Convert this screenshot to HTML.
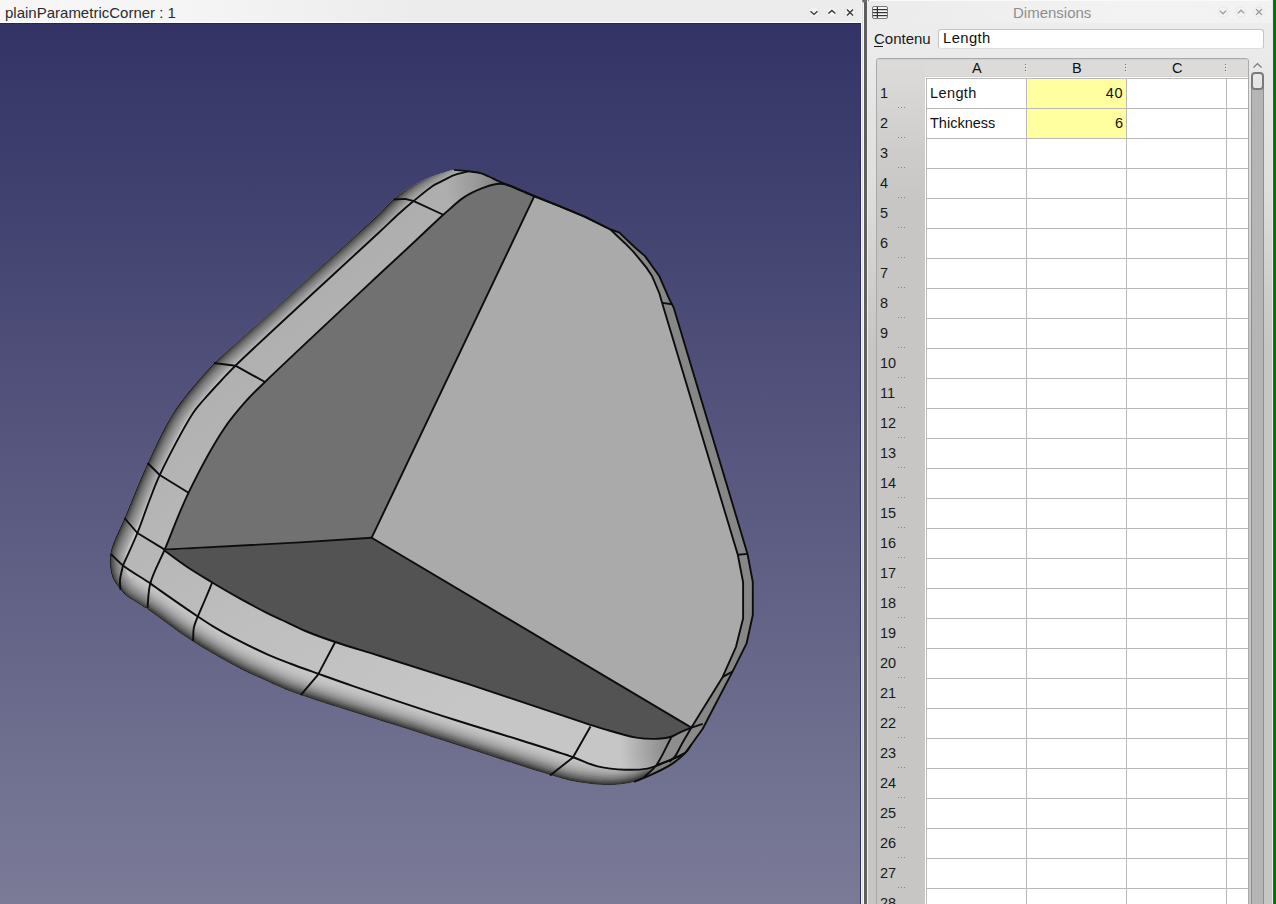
<!DOCTYPE html>
<html><head><meta charset="utf-8">
<style>
html,body{margin:0;padding:0;width:1276px;height:904px;overflow:hidden;background:#ebebeb;font-family:"Liberation Sans", sans-serif;}
.abs{position:absolute;}
#ltitle{left:0;top:0;width:861px;height:22px;background:linear-gradient(to right,#f6f6f6 0px,#f5f5f5 180px,#efefef 340px,#ececec 420px,#ececec 861px);border-bottom:1px solid #ffffff;}
#ltitle .t{position:absolute;left:5px;top:4px;font-size:15px;color:#2b2b2b;white-space:pre;line-height:17px;}
#view{left:0;top:23px;width:861px;height:881px;}
#rpanel{left:867px;top:0;width:406px;height:904px;background:linear-gradient(to bottom,#eeeeee 0px,#ebebeb 50px,#e9e9e9 66px,#e3e3e2 126px,#dfdfdd 186px,#d5d4d3 250px,#cccbca 306px,#c7c6c5 345px,#c7c6c5 904px);}
#rtitle{left:868px;top:0;width:404px;height:23px;background:linear-gradient(100deg,#ebebeb 0%,#eeeeee 25%,#f3f3f3 65%,#f2f2f2 100%);border-top:1px solid #fafafa;box-sizing:border-box;border-radius:3px 3px 0 0;}
.rn{position:absolute;left:880px;font-size:14.5px;color:#1a1a1a;line-height:17px;}
.dots{position:absolute;left:898px;width:7px;height:2px;background:
 radial-gradient(circle at 0.5px 0.5px,#858585 0.6px,transparent 0.9px) 0 0/3px 2px repeat-x;}
.ct{position:absolute;font-size:14.5px;color:#111;line-height:17px;white-space:pre;}
.btn{position:absolute;width:11px;height:11px;border-radius:50%;background:radial-gradient(circle,#f4f4f4 60%,#e4e4e4 100%);}
</style></head><body>
<div id="ltitle" class="abs"><span class="t">plainParametricCorner : 1</span></div>
<svg class="abs" style="left:0;top:0" width="868" height="23">
 <g fill="none" stroke="#3a3a3a" stroke-width="1.4" stroke-linecap="butt">
  <circle cx="814" cy="12" r="5.5" fill="#f2f2f2" stroke="#e6e6e6" stroke-width="1"/>
  <circle cx="832" cy="12" r="5.5" fill="#f2f2f2" stroke="#e6e6e6" stroke-width="1"/>
  <circle cx="850" cy="12" r="5.5" fill="#f2f2f2" stroke="#e6e6e6" stroke-width="1"/>
  <polyline points="810.5,11.2 814,14.4 817.5,11.2"/>
  <polyline points="828.4,13.6 831.9,10.4 835.4,13.6"/>
  <path d="M847,9.6 L853,15.5 M853,9.6 L847,15.5"/>
 </g>
</svg>
<svg id="view" class="abs" width="861" height="881" viewBox="0 23 861 881">
<defs>
 <linearGradient id="bg" x1="0" y1="23" x2="0" y2="904" gradientUnits="userSpaceOnUse">
  <stop offset="0" stop-color="#333366"/><stop offset="1" stop-color="#7b7b98"/>
 </linearGradient>
 <linearGradient id="innerg" x1="200" y1="350" x2="450" y2="720" gradientUnits="userSpaceOnUse">
  <stop offset="0" stop-color="#aeaeae"/><stop offset="0.55" stop-color="#bebebe"/><stop offset="0.9" stop-color="#c4c4c4"/><stop offset="1" stop-color="#c6c6c6"/>
 </linearGradient>
 <radialGradient id="cornerg" cx="690" cy="748" r="70" gradientUnits="userSpaceOnUse">
  <stop offset="0" stop-color="#000" stop-opacity="0.45"/><stop offset="0.45" stop-color="#000" stop-opacity="0.25"/><stop offset="1" stop-color="#000" stop-opacity="0"/>
 </radialGradient>
 <linearGradient id="fadeg" x1="395" y1="0" x2="462" y2="0" gradientUnits="userSpaceOnUse">
  <stop offset="0" stop-color="#fff"/><stop offset="1" stop-color="#fff" stop-opacity="0.15"/>
 </linearGradient>
 <mask id="fadem" maskUnits="userSpaceOnUse" x="0" y="23" width="861" height="881"><rect x="0" y="23" width="861" height="881" fill="url(#fadeg)"/></mask>
 <radialGradient id="topg" cx="505" cy="184" r="60" gradientUnits="userSpaceOnUse">
  <stop offset="0" stop-color="#000" stop-opacity="0.3"/><stop offset="0.5" stop-color="#000" stop-opacity="0.12"/><stop offset="1" stop-color="#000" stop-opacity="0"/>
 </radialGradient>
 <clipPath id="silclip"><path d="M214.0,363.0 C269.3,312.9 356.3,235.3 380.0,212.7 C386.7,206.3 388.0,204.0 392.5,200.1 C397.2,196.0 402.3,192.1 407.6,188.8 C412.8,185.5 418.4,182.6 423.9,180.1 C429.3,177.6 434.9,175.5 440.2,173.8 C445.0,172.2 449.4,170.3 454.1,169.9 C458.7,169.5 463.7,170.7 468.2,171.3 C472.4,171.8 476.8,172.2 480.5,173.2 C483.6,174.0 486.1,175.2 488.9,176.5 C492.0,177.9 494.9,179.7 498.3,181.2 C502.1,182.9 506.1,184.1 510.6,185.9 C516.4,188.2 523.5,191.4 530.0,194.1 L530.0,194.1 L558.8,205.8 L584.6,216.6 L610.5,229.5 L610.5,229.5 L619.1,232.4 L635.0,247.5 L645.0,256.1 L659.4,276.3 L669.4,299.3 L673.8,307.9 L747.5,553.9 L752.8,582.2 L752.8,615.0 L746.6,643.3 L732.5,671.6 L702.7,728.8 L702.7,728.8 C699.0,733.9 694.8,739.8 691.6,744.2 C689.1,747.6 687.8,750.1 685.0,753.1 C681.5,756.8 677.1,760.6 671.7,764.1 C664.6,768.7 652.2,774.3 645.2,777.4 C640.8,779.4 638.1,780.6 634.1,781.8 C629.7,783.1 624.8,784.0 619.8,784.6 C614.5,785.2 608.7,785.3 603.2,785.1 C597.7,784.9 592.1,784.2 586.6,783.5 C581.1,782.8 575.5,781.6 570.0,780.7 L570.0,780.7 C562.7,778.6 558.4,777.6 548.1,774.5 C523.1,766.9 462.9,747.1 420.0,733.3 C376.7,719.4 315.5,701.0 289.7,691.3 C278.6,687.1 274.0,684.6 266.2,681.1 C258.3,677.6 250.5,674.1 242.7,670.2 C234.8,666.3 227.0,662.0 219.2,657.6 C211.3,653.1 202.7,647.9 195.7,643.5 C189.9,639.9 186.2,637.5 180.0,633.3 C170.8,626.9 155.9,615.4 146.0,608.6 C138.5,603.5 130.6,599.5 126.0,595.6 C123.2,593.2 122.0,591.5 120.0,589.0 C117.7,586.1 114.7,582.7 113.0,579.0 C111.3,575.1 110.4,570.5 110.0,566.0 C109.6,561.2 109.5,556.8 110.8,551.0 C112.8,542.0 119.2,530.4 124.4,518.0 C131.1,502.0 139.4,480.8 147.6,463.0 C155.6,445.8 163.8,427.6 173.0,413.0 C180.9,400.4 190.9,389.1 198.5,380.0 C204.2,373.3 208.8,368.7 214.0,363.0 Z"/></clipPath>
 <filter id="bl" x="-10%" y="-10%" width="120%" height="120%"><feGaussianBlur stdDeviation="0.6"/></filter>
</defs>
<rect x="0" y="23" width="861" height="881" fill="url(#bg)"/>
<rect x="0" y="23" width="861" height="1" fill="#24245a"/>
<rect x="860" y="23" width="1" height="881" fill="#2a2a5e"/>
<path d="M214.0,363.0 C269.3,312.9 356.3,235.3 380.0,212.7 C386.7,206.3 388.0,204.0 392.5,200.1 C397.2,196.0 402.3,192.1 407.6,188.8 C412.8,185.5 418.4,182.6 423.9,180.1 C429.3,177.6 434.9,175.5 440.2,173.8 C445.0,172.2 449.4,170.3 454.1,169.9 C458.7,169.5 463.7,170.7 468.2,171.3 C472.4,171.8 476.8,172.2 480.5,173.2 C483.6,174.0 486.1,175.2 488.9,176.5 C492.0,177.9 494.9,179.7 498.3,181.2 C502.1,182.9 506.1,184.1 510.6,185.9 C516.4,188.2 523.5,191.4 530.0,194.1 L530.0,194.1 L558.8,205.8 L584.6,216.6 L610.5,229.5 L610.5,229.5 L619.1,232.4 L635.0,247.5 L645.0,256.1 L659.4,276.3 L669.4,299.3 L673.8,307.9 L747.5,553.9 L752.8,582.2 L752.8,615.0 L746.6,643.3 L732.5,671.6 L702.7,728.8 L702.7,728.8 C699.0,733.9 694.8,739.8 691.6,744.2 C689.1,747.6 687.8,750.1 685.0,753.1 C681.5,756.8 677.1,760.6 671.7,764.1 C664.6,768.7 652.2,774.3 645.2,777.4 C640.8,779.4 638.1,780.6 634.1,781.8 C629.7,783.1 624.8,784.0 619.8,784.6 C614.5,785.2 608.7,785.3 603.2,785.1 C597.7,784.9 592.1,784.2 586.6,783.5 C581.1,782.8 575.5,781.6 570.0,780.7 L570.0,780.7 C562.7,778.6 558.4,777.6 548.1,774.5 C523.1,766.9 462.9,747.1 420.0,733.3 C376.7,719.4 315.5,701.0 289.7,691.3 C278.6,687.1 274.0,684.6 266.2,681.1 C258.3,677.6 250.5,674.1 242.7,670.2 C234.8,666.3 227.0,662.0 219.2,657.6 C211.3,653.1 202.7,647.9 195.7,643.5 C189.9,639.9 186.2,637.5 180.0,633.3 C170.8,626.9 155.9,615.4 146.0,608.6 C138.5,603.5 130.6,599.5 126.0,595.6 C123.2,593.2 122.0,591.5 120.0,589.0 C117.7,586.1 114.7,582.7 113.0,579.0 C111.3,575.1 110.4,570.5 110.0,566.0 C109.6,561.2 109.5,556.8 110.8,551.0 C112.8,542.0 119.2,530.4 124.4,518.0 C131.1,502.0 139.4,480.8 147.6,463.0 C155.6,445.8 163.8,427.6 173.0,413.0 C180.9,400.4 190.9,389.1 198.5,380.0 C204.2,373.3 208.8,368.7 214.0,363.0 Z" fill="#c4c4c4"/>
<g clip-path="url(#silclip)"><g filter="url(#bl)">
<rect x="0" y="23" width="861" height="881" fill="#c2c2c2"/>
<path d="M685.0,753.1 C680.6,756.8 677.1,760.6 671.7,764.1 C664.6,768.7 652.2,774.3 645.2,777.4 C640.8,779.4 638.1,780.6 634.1,781.8 C629.7,783.1 624.8,784.0 619.8,784.6 C614.5,785.2 608.7,785.3 603.2,785.1 C597.7,784.9 592.1,784.2 586.6,783.5 C581.1,782.8 575.9,782.0 570.0,780.7 C563.2,779.2 558.4,777.6 548.1,774.5 C523.1,766.9 462.9,747.1 420.0,733.3 C376.7,719.4 315.5,701.0 289.7,691.3 C278.6,687.1 274.0,684.6 266.2,681.1 C258.3,677.6 250.5,674.1 242.7,670.2 C234.8,666.3 227.0,662.0 219.2,657.6 C211.3,653.1 202.7,647.9 195.7,643.5 C189.9,639.9 186.2,637.5 180.0,633.3 C170.8,626.9 155.9,615.4 146.0,608.6 C138.5,603.5 130.6,599.5 126.0,595.6 C123.2,593.2 122.0,591.2 120.0,589.0" fill="none" stroke="rgb(199,199,199)" stroke-width="54.0" stroke-linejoin="round" stroke-linecap="butt"/>
<path d="M685.0,753.1 C680.6,756.8 677.1,760.6 671.7,764.1 C664.6,768.7 652.2,774.3 645.2,777.4 C640.8,779.4 638.1,780.6 634.1,781.8 C629.7,783.1 624.8,784.0 619.8,784.6 C614.5,785.2 608.7,785.3 603.2,785.1 C597.7,784.9 592.1,784.2 586.6,783.5 C581.1,782.8 575.9,782.0 570.0,780.7 C563.2,779.2 558.4,777.6 548.1,774.5 C523.1,766.9 462.9,747.1 420.0,733.3 C376.7,719.4 315.5,701.0 289.7,691.3 C278.6,687.1 274.0,684.6 266.2,681.1 C258.3,677.6 250.5,674.1 242.7,670.2 C234.8,666.3 227.0,662.0 219.2,657.6 C211.3,653.1 202.7,647.9 195.7,643.5 C189.9,639.9 186.2,637.5 180.0,633.3 C170.8,626.9 155.9,615.4 146.0,608.6 C138.5,603.5 130.6,599.5 126.0,595.6 C123.2,593.2 122.0,591.2 120.0,589.0" fill="none" stroke="rgb(199,199,199)" stroke-width="50.6" stroke-linejoin="round" stroke-linecap="butt"/>
<path d="M685.0,753.1 C680.6,756.8 677.1,760.6 671.7,764.1 C664.6,768.7 652.2,774.3 645.2,777.4 C640.8,779.4 638.1,780.6 634.1,781.8 C629.7,783.1 624.8,784.0 619.8,784.6 C614.5,785.2 608.7,785.3 603.2,785.1 C597.7,784.9 592.1,784.2 586.6,783.5 C581.1,782.8 575.9,782.0 570.0,780.7 C563.2,779.2 558.4,777.6 548.1,774.5 C523.1,766.9 462.9,747.1 420.0,733.3 C376.7,719.4 315.5,701.0 289.7,691.3 C278.6,687.1 274.0,684.6 266.2,681.1 C258.3,677.6 250.5,674.1 242.7,670.2 C234.8,666.3 227.0,662.0 219.2,657.6 C211.3,653.1 202.7,647.9 195.7,643.5 C189.9,639.9 186.2,637.5 180.0,633.3 C170.8,626.9 155.9,615.4 146.0,608.6 C138.5,603.5 130.6,599.5 126.0,595.6 C123.2,593.2 122.0,591.2 120.0,589.0" fill="none" stroke="rgb(198,198,198)" stroke-width="47.2" stroke-linejoin="round" stroke-linecap="butt"/>
<path d="M685.0,753.1 C680.6,756.8 677.1,760.6 671.7,764.1 C664.6,768.7 652.2,774.3 645.2,777.4 C640.8,779.4 638.1,780.6 634.1,781.8 C629.7,783.1 624.8,784.0 619.8,784.6 C614.5,785.2 608.7,785.3 603.2,785.1 C597.7,784.9 592.1,784.2 586.6,783.5 C581.1,782.8 575.9,782.0 570.0,780.7 C563.2,779.2 558.4,777.6 548.1,774.5 C523.1,766.9 462.9,747.1 420.0,733.3 C376.7,719.4 315.5,701.0 289.7,691.3 C278.6,687.1 274.0,684.6 266.2,681.1 C258.3,677.6 250.5,674.1 242.7,670.2 C234.8,666.3 227.0,662.0 219.2,657.6 C211.3,653.1 202.7,647.9 195.7,643.5 C189.9,639.9 186.2,637.5 180.0,633.3 C170.8,626.9 155.9,615.4 146.0,608.6 C138.5,603.5 130.6,599.5 126.0,595.6 C123.2,593.2 122.0,591.2 120.0,589.0" fill="none" stroke="rgb(196,196,196)" stroke-width="43.9" stroke-linejoin="round" stroke-linecap="butt"/>
<path d="M685.0,753.1 C680.6,756.8 677.1,760.6 671.7,764.1 C664.6,768.7 652.2,774.3 645.2,777.4 C640.8,779.4 638.1,780.6 634.1,781.8 C629.7,783.1 624.8,784.0 619.8,784.6 C614.5,785.2 608.7,785.3 603.2,785.1 C597.7,784.9 592.1,784.2 586.6,783.5 C581.1,782.8 575.9,782.0 570.0,780.7 C563.2,779.2 558.4,777.6 548.1,774.5 C523.1,766.9 462.9,747.1 420.0,733.3 C376.7,719.4 315.5,701.0 289.7,691.3 C278.6,687.1 274.0,684.6 266.2,681.1 C258.3,677.6 250.5,674.1 242.7,670.2 C234.8,666.3 227.0,662.0 219.2,657.6 C211.3,653.1 202.7,647.9 195.7,643.5 C189.9,639.9 186.2,637.5 180.0,633.3 C170.8,626.9 155.9,615.4 146.0,608.6 C138.5,603.5 130.6,599.5 126.0,595.6 C123.2,593.2 122.0,591.2 120.0,589.0" fill="none" stroke="rgb(193,193,193)" stroke-width="40.5" stroke-linejoin="round" stroke-linecap="butt"/>
<path d="M685.0,753.1 C680.6,756.8 677.1,760.6 671.7,764.1 C664.6,768.7 652.2,774.3 645.2,777.4 C640.8,779.4 638.1,780.6 634.1,781.8 C629.7,783.1 624.8,784.0 619.8,784.6 C614.5,785.2 608.7,785.3 603.2,785.1 C597.7,784.9 592.1,784.2 586.6,783.5 C581.1,782.8 575.9,782.0 570.0,780.7 C563.2,779.2 558.4,777.6 548.1,774.5 C523.1,766.9 462.9,747.1 420.0,733.3 C376.7,719.4 315.5,701.0 289.7,691.3 C278.6,687.1 274.0,684.6 266.2,681.1 C258.3,677.6 250.5,674.1 242.7,670.2 C234.8,666.3 227.0,662.0 219.2,657.6 C211.3,653.1 202.7,647.9 195.7,643.5 C189.9,639.9 186.2,637.5 180.0,633.3 C170.8,626.9 155.9,615.4 146.0,608.6 C138.5,603.5 130.6,599.5 126.0,595.6 C123.2,593.2 122.0,591.2 120.0,589.0" fill="none" stroke="rgb(188,188,188)" stroke-width="37.1" stroke-linejoin="round" stroke-linecap="butt"/>
<path d="M685.0,753.1 C680.6,756.8 677.1,760.6 671.7,764.1 C664.6,768.7 652.2,774.3 645.2,777.4 C640.8,779.4 638.1,780.6 634.1,781.8 C629.7,783.1 624.8,784.0 619.8,784.6 C614.5,785.2 608.7,785.3 603.2,785.1 C597.7,784.9 592.1,784.2 586.6,783.5 C581.1,782.8 575.9,782.0 570.0,780.7 C563.2,779.2 558.4,777.6 548.1,774.5 C523.1,766.9 462.9,747.1 420.0,733.3 C376.7,719.4 315.5,701.0 289.7,691.3 C278.6,687.1 274.0,684.6 266.2,681.1 C258.3,677.6 250.5,674.1 242.7,670.2 C234.8,666.3 227.0,662.0 219.2,657.6 C211.3,653.1 202.7,647.9 195.7,643.5 C189.9,639.9 186.2,637.5 180.0,633.3 C170.8,626.9 155.9,615.4 146.0,608.6 C138.5,603.5 130.6,599.5 126.0,595.6 C123.2,593.2 122.0,591.2 120.0,589.0" fill="none" stroke="rgb(183,183,183)" stroke-width="33.8" stroke-linejoin="round" stroke-linecap="butt"/>
<path d="M685.0,753.1 C680.6,756.8 677.1,760.6 671.7,764.1 C664.6,768.7 652.2,774.3 645.2,777.4 C640.8,779.4 638.1,780.6 634.1,781.8 C629.7,783.1 624.8,784.0 619.8,784.6 C614.5,785.2 608.7,785.3 603.2,785.1 C597.7,784.9 592.1,784.2 586.6,783.5 C581.1,782.8 575.9,782.0 570.0,780.7 C563.2,779.2 558.4,777.6 548.1,774.5 C523.1,766.9 462.9,747.1 420.0,733.3 C376.7,719.4 315.5,701.0 289.7,691.3 C278.6,687.1 274.0,684.6 266.2,681.1 C258.3,677.6 250.5,674.1 242.7,670.2 C234.8,666.3 227.0,662.0 219.2,657.6 C211.3,653.1 202.7,647.9 195.7,643.5 C189.9,639.9 186.2,637.5 180.0,633.3 C170.8,626.9 155.9,615.4 146.0,608.6 C138.5,603.5 130.6,599.5 126.0,595.6 C123.2,593.2 122.0,591.2 120.0,589.0" fill="none" stroke="rgb(175,175,175)" stroke-width="30.4" stroke-linejoin="round" stroke-linecap="butt"/>
<path d="M685.0,753.1 C680.6,756.8 677.1,760.6 671.7,764.1 C664.6,768.7 652.2,774.3 645.2,777.4 C640.8,779.4 638.1,780.6 634.1,781.8 C629.7,783.1 624.8,784.0 619.8,784.6 C614.5,785.2 608.7,785.3 603.2,785.1 C597.7,784.9 592.1,784.2 586.6,783.5 C581.1,782.8 575.9,782.0 570.0,780.7 C563.2,779.2 558.4,777.6 548.1,774.5 C523.1,766.9 462.9,747.1 420.0,733.3 C376.7,719.4 315.5,701.0 289.7,691.3 C278.6,687.1 274.0,684.6 266.2,681.1 C258.3,677.6 250.5,674.1 242.7,670.2 C234.8,666.3 227.0,662.0 219.2,657.6 C211.3,653.1 202.7,647.9 195.7,643.5 C189.9,639.9 186.2,637.5 180.0,633.3 C170.8,626.9 155.9,615.4 146.0,608.6 C138.5,603.5 130.6,599.5 126.0,595.6 C123.2,593.2 122.0,591.2 120.0,589.0" fill="none" stroke="rgb(167,167,167)" stroke-width="27.0" stroke-linejoin="round" stroke-linecap="butt"/>
<path d="M685.0,753.1 C680.6,756.8 677.1,760.6 671.7,764.1 C664.6,768.7 652.2,774.3 645.2,777.4 C640.8,779.4 638.1,780.6 634.1,781.8 C629.7,783.1 624.8,784.0 619.8,784.6 C614.5,785.2 608.7,785.3 603.2,785.1 C597.7,784.9 592.1,784.2 586.6,783.5 C581.1,782.8 575.9,782.0 570.0,780.7 C563.2,779.2 558.4,777.6 548.1,774.5 C523.1,766.9 462.9,747.1 420.0,733.3 C376.7,719.4 315.5,701.0 289.7,691.3 C278.6,687.1 274.0,684.6 266.2,681.1 C258.3,677.6 250.5,674.1 242.7,670.2 C234.8,666.3 227.0,662.0 219.2,657.6 C211.3,653.1 202.7,647.9 195.7,643.5 C189.9,639.9 186.2,637.5 180.0,633.3 C170.8,626.9 155.9,615.4 146.0,608.6 C138.5,603.5 130.6,599.5 126.0,595.6 C123.2,593.2 122.0,591.2 120.0,589.0" fill="none" stroke="rgb(156,156,156)" stroke-width="23.6" stroke-linejoin="round" stroke-linecap="butt"/>
<path d="M685.0,753.1 C680.6,756.8 677.1,760.6 671.7,764.1 C664.6,768.7 652.2,774.3 645.2,777.4 C640.8,779.4 638.1,780.6 634.1,781.8 C629.7,783.1 624.8,784.0 619.8,784.6 C614.5,785.2 608.7,785.3 603.2,785.1 C597.7,784.9 592.1,784.2 586.6,783.5 C581.1,782.8 575.9,782.0 570.0,780.7 C563.2,779.2 558.4,777.6 548.1,774.5 C523.1,766.9 462.9,747.1 420.0,733.3 C376.7,719.4 315.5,701.0 289.7,691.3 C278.6,687.1 274.0,684.6 266.2,681.1 C258.3,677.6 250.5,674.1 242.7,670.2 C234.8,666.3 227.0,662.0 219.2,657.6 C211.3,653.1 202.7,647.9 195.7,643.5 C189.9,639.9 186.2,637.5 180.0,633.3 C170.8,626.9 155.9,615.4 146.0,608.6 C138.5,603.5 130.6,599.5 126.0,595.6 C123.2,593.2 122.0,591.2 120.0,589.0" fill="none" stroke="rgb(144,144,144)" stroke-width="20.2" stroke-linejoin="round" stroke-linecap="butt"/>
<path d="M685.0,753.1 C680.6,756.8 677.1,760.6 671.7,764.1 C664.6,768.7 652.2,774.3 645.2,777.4 C640.8,779.4 638.1,780.6 634.1,781.8 C629.7,783.1 624.8,784.0 619.8,784.6 C614.5,785.2 608.7,785.3 603.2,785.1 C597.7,784.9 592.1,784.2 586.6,783.5 C581.1,782.8 575.9,782.0 570.0,780.7 C563.2,779.2 558.4,777.6 548.1,774.5 C523.1,766.9 462.9,747.1 420.0,733.3 C376.7,719.4 315.5,701.0 289.7,691.3 C278.6,687.1 274.0,684.6 266.2,681.1 C258.3,677.6 250.5,674.1 242.7,670.2 C234.8,666.3 227.0,662.0 219.2,657.6 C211.3,653.1 202.7,647.9 195.7,643.5 C189.9,639.9 186.2,637.5 180.0,633.3 C170.8,626.9 155.9,615.4 146.0,608.6 C138.5,603.5 130.6,599.5 126.0,595.6 C123.2,593.2 122.0,591.2 120.0,589.0" fill="none" stroke="rgb(129,129,129)" stroke-width="16.9" stroke-linejoin="round" stroke-linecap="butt"/>
<path d="M685.0,753.1 C680.6,756.8 677.1,760.6 671.7,764.1 C664.6,768.7 652.2,774.3 645.2,777.4 C640.8,779.4 638.1,780.6 634.1,781.8 C629.7,783.1 624.8,784.0 619.8,784.6 C614.5,785.2 608.7,785.3 603.2,785.1 C597.7,784.9 592.1,784.2 586.6,783.5 C581.1,782.8 575.9,782.0 570.0,780.7 C563.2,779.2 558.4,777.6 548.1,774.5 C523.1,766.9 462.9,747.1 420.0,733.3 C376.7,719.4 315.5,701.0 289.7,691.3 C278.6,687.1 274.0,684.6 266.2,681.1 C258.3,677.6 250.5,674.1 242.7,670.2 C234.8,666.3 227.0,662.0 219.2,657.6 C211.3,653.1 202.7,647.9 195.7,643.5 C189.9,639.9 186.2,637.5 180.0,633.3 C170.8,626.9 155.9,615.4 146.0,608.6 C138.5,603.5 130.6,599.5 126.0,595.6 C123.2,593.2 122.0,591.2 120.0,589.0" fill="none" stroke="rgb(113,113,113)" stroke-width="13.5" stroke-linejoin="round" stroke-linecap="butt"/>
<path d="M685.0,753.1 C680.6,756.8 677.1,760.6 671.7,764.1 C664.6,768.7 652.2,774.3 645.2,777.4 C640.8,779.4 638.1,780.6 634.1,781.8 C629.7,783.1 624.8,784.0 619.8,784.6 C614.5,785.2 608.7,785.3 603.2,785.1 C597.7,784.9 592.1,784.2 586.6,783.5 C581.1,782.8 575.9,782.0 570.0,780.7 C563.2,779.2 558.4,777.6 548.1,774.5 C523.1,766.9 462.9,747.1 420.0,733.3 C376.7,719.4 315.5,701.0 289.7,691.3 C278.6,687.1 274.0,684.6 266.2,681.1 C258.3,677.6 250.5,674.1 242.7,670.2 C234.8,666.3 227.0,662.0 219.2,657.6 C211.3,653.1 202.7,647.9 195.7,643.5 C189.9,639.9 186.2,637.5 180.0,633.3 C170.8,626.9 155.9,615.4 146.0,608.6 C138.5,603.5 130.6,599.5 126.0,595.6 C123.2,593.2 122.0,591.2 120.0,589.0" fill="none" stroke="rgb(95,95,95)" stroke-width="10.1" stroke-linejoin="round" stroke-linecap="butt"/>
<path d="M685.0,753.1 C680.6,756.8 677.1,760.6 671.7,764.1 C664.6,768.7 652.2,774.3 645.2,777.4 C640.8,779.4 638.1,780.6 634.1,781.8 C629.7,783.1 624.8,784.0 619.8,784.6 C614.5,785.2 608.7,785.3 603.2,785.1 C597.7,784.9 592.1,784.2 586.6,783.5 C581.1,782.8 575.9,782.0 570.0,780.7 C563.2,779.2 558.4,777.6 548.1,774.5 C523.1,766.9 462.9,747.1 420.0,733.3 C376.7,719.4 315.5,701.0 289.7,691.3 C278.6,687.1 274.0,684.6 266.2,681.1 C258.3,677.6 250.5,674.1 242.7,670.2 C234.8,666.3 227.0,662.0 219.2,657.6 C211.3,653.1 202.7,647.9 195.7,643.5 C189.9,639.9 186.2,637.5 180.0,633.3 C170.8,626.9 155.9,615.4 146.0,608.6 C138.5,603.5 130.6,599.5 126.0,595.6 C123.2,593.2 122.0,591.2 120.0,589.0" fill="none" stroke="rgb(74,74,74)" stroke-width="6.8" stroke-linejoin="round" stroke-linecap="butt"/>
<path d="M685.0,753.1 C680.6,756.8 677.1,760.6 671.7,764.1 C664.6,768.7 652.2,774.3 645.2,777.4 C640.8,779.4 638.1,780.6 634.1,781.8 C629.7,783.1 624.8,784.0 619.8,784.6 C614.5,785.2 608.7,785.3 603.2,785.1 C597.7,784.9 592.1,784.2 586.6,783.5 C581.1,782.8 575.9,782.0 570.0,780.7 C563.2,779.2 558.4,777.6 548.1,774.5 C523.1,766.9 462.9,747.1 420.0,733.3 C376.7,719.4 315.5,701.0 289.7,691.3 C278.6,687.1 274.0,684.6 266.2,681.1 C258.3,677.6 250.5,674.1 242.7,670.2 C234.8,666.3 227.0,662.0 219.2,657.6 C211.3,653.1 202.7,647.9 195.7,643.5 C189.9,639.9 186.2,637.5 180.0,633.3 C170.8,626.9 155.9,615.4 146.0,608.6 C138.5,603.5 130.6,599.5 126.0,595.6 C123.2,593.2 122.0,591.2 120.0,589.0" fill="none" stroke="rgb(52,52,52)" stroke-width="3.4" stroke-linejoin="round" stroke-linecap="butt"/>
<path d="M685.0,753.1 C680.6,756.8 677.1,760.6 671.7,764.1 C664.6,768.7 652.2,774.3 645.2,777.4 C640.8,779.4 638.1,780.6 634.1,781.8 C629.7,783.1 624.8,784.0 619.8,784.6 C614.5,785.2 608.7,785.3 603.2,785.1 C597.7,784.9 592.1,784.2 586.6,783.5 C581.1,782.8 575.9,782.0 570.0,780.7 C563.2,779.2 558.4,777.6 548.1,774.5 C523.1,766.9 462.9,747.1 420.0,733.3 C376.7,719.4 315.5,701.0 289.7,691.3 C278.6,687.1 274.0,684.6 266.2,681.1 C258.3,677.6 250.5,674.1 242.7,670.2 C234.8,666.3 227.0,662.0 219.2,657.6 C211.3,653.1 202.7,647.9 195.7,643.5 C189.9,639.9 186.2,637.5 180.0,633.3 C170.8,626.9 155.9,615.4 146.0,608.6 C138.5,603.5 130.6,599.5 126.0,595.6 C123.2,593.2 122.0,591.2 120.0,589.0" fill="none" stroke="rgb(40,40,40)" stroke-width="1.2"/>
<g mask="url(#fadem)"><path d="M530.0,194.1 C523.5,191.4 516.4,188.2 510.6,185.9 C506.1,184.1 502.1,182.9 498.3,181.2 C494.9,179.7 492.0,177.9 488.9,176.5 C486.1,175.2 483.6,174.0 480.5,173.2 C476.8,172.2 472.4,171.8 468.2,171.3 C463.7,170.7 458.7,169.5 454.1,169.9 C449.4,170.3 445.0,172.2 440.2,173.8 C434.9,175.5 429.3,177.6 423.9,180.1 C418.4,182.6 412.8,185.5 407.6,188.8 C402.3,192.1 397.2,196.0 392.5,200.1 C388.0,204.0 386.7,206.3 380.0,212.7 C356.3,235.3 239.6,337.5 214.0,363.0 C205.8,371.2 204.2,373.3 198.5,380.0 C190.9,389.1 180.9,400.4 173.0,413.0 C163.8,427.6 155.6,445.8 147.6,463.0 C139.4,480.8 131.1,502.0 124.4,518.0 C119.2,530.4 112.8,542.0 110.8,551.0 C109.5,556.8 109.6,561.2 110.0,566.0 C110.4,570.5 111.3,575.1 113.0,579.0 C114.7,582.7 117.7,586.1 120.0,589.0 C122.0,591.5 123.2,593.2 126.0,595.6 C130.6,599.5 139.3,604.3 146.0,608.6" fill="none" stroke="rgb(175,175,175)" stroke-width="30.0" stroke-linejoin="round" stroke-linecap="butt"/>
<path d="M530.0,194.1 C523.5,191.4 516.4,188.2 510.6,185.9 C506.1,184.1 502.1,182.9 498.3,181.2 C494.9,179.7 492.0,177.9 488.9,176.5 C486.1,175.2 483.6,174.0 480.5,173.2 C476.8,172.2 472.4,171.8 468.2,171.3 C463.7,170.7 458.7,169.5 454.1,169.9 C449.4,170.3 445.0,172.2 440.2,173.8 C434.9,175.5 429.3,177.6 423.9,180.1 C418.4,182.6 412.8,185.5 407.6,188.8 C402.3,192.1 397.2,196.0 392.5,200.1 C388.0,204.0 386.7,206.3 380.0,212.7 C356.3,235.3 239.6,337.5 214.0,363.0 C205.8,371.2 204.2,373.3 198.5,380.0 C190.9,389.1 180.9,400.4 173.0,413.0 C163.8,427.6 155.6,445.8 147.6,463.0 C139.4,480.8 131.1,502.0 124.4,518.0 C119.2,530.4 112.8,542.0 110.8,551.0 C109.5,556.8 109.6,561.2 110.0,566.0 C110.4,570.5 111.3,575.1 113.0,579.0 C114.7,582.7 117.7,586.1 120.0,589.0 C122.0,591.5 123.2,593.2 126.0,595.6 C130.6,599.5 139.3,604.3 146.0,608.6" fill="none" stroke="rgb(170,170,170)" stroke-width="28.1" stroke-linejoin="round" stroke-linecap="butt"/>
<path d="M530.0,194.1 C523.5,191.4 516.4,188.2 510.6,185.9 C506.1,184.1 502.1,182.9 498.3,181.2 C494.9,179.7 492.0,177.9 488.9,176.5 C486.1,175.2 483.6,174.0 480.5,173.2 C476.8,172.2 472.4,171.8 468.2,171.3 C463.7,170.7 458.7,169.5 454.1,169.9 C449.4,170.3 445.0,172.2 440.2,173.8 C434.9,175.5 429.3,177.6 423.9,180.1 C418.4,182.6 412.8,185.5 407.6,188.8 C402.3,192.1 397.2,196.0 392.5,200.1 C388.0,204.0 386.7,206.3 380.0,212.7 C356.3,235.3 239.6,337.5 214.0,363.0 C205.8,371.2 204.2,373.3 198.5,380.0 C190.9,389.1 180.9,400.4 173.0,413.0 C163.8,427.6 155.6,445.8 147.6,463.0 C139.4,480.8 131.1,502.0 124.4,518.0 C119.2,530.4 112.8,542.0 110.8,551.0 C109.5,556.8 109.6,561.2 110.0,566.0 C110.4,570.5 111.3,575.1 113.0,579.0 C114.7,582.7 117.7,586.1 120.0,589.0 C122.0,591.5 123.2,593.2 126.0,595.6 C130.6,599.5 139.3,604.3 146.0,608.6" fill="none" stroke="rgb(165,165,165)" stroke-width="26.2" stroke-linejoin="round" stroke-linecap="butt"/>
<path d="M530.0,194.1 C523.5,191.4 516.4,188.2 510.6,185.9 C506.1,184.1 502.1,182.9 498.3,181.2 C494.9,179.7 492.0,177.9 488.9,176.5 C486.1,175.2 483.6,174.0 480.5,173.2 C476.8,172.2 472.4,171.8 468.2,171.3 C463.7,170.7 458.7,169.5 454.1,169.9 C449.4,170.3 445.0,172.2 440.2,173.8 C434.9,175.5 429.3,177.6 423.9,180.1 C418.4,182.6 412.8,185.5 407.6,188.8 C402.3,192.1 397.2,196.0 392.5,200.1 C388.0,204.0 386.7,206.3 380.0,212.7 C356.3,235.3 239.6,337.5 214.0,363.0 C205.8,371.2 204.2,373.3 198.5,380.0 C190.9,389.1 180.9,400.4 173.0,413.0 C163.8,427.6 155.6,445.8 147.6,463.0 C139.4,480.8 131.1,502.0 124.4,518.0 C119.2,530.4 112.8,542.0 110.8,551.0 C109.5,556.8 109.6,561.2 110.0,566.0 C110.4,570.5 111.3,575.1 113.0,579.0 C114.7,582.7 117.7,586.1 120.0,589.0 C122.0,591.5 123.2,593.2 126.0,595.6 C130.6,599.5 139.3,604.3 146.0,608.6" fill="none" stroke="rgb(159,159,159)" stroke-width="24.4" stroke-linejoin="round" stroke-linecap="butt"/>
<path d="M530.0,194.1 C523.5,191.4 516.4,188.2 510.6,185.9 C506.1,184.1 502.1,182.9 498.3,181.2 C494.9,179.7 492.0,177.9 488.9,176.5 C486.1,175.2 483.6,174.0 480.5,173.2 C476.8,172.2 472.4,171.8 468.2,171.3 C463.7,170.7 458.7,169.5 454.1,169.9 C449.4,170.3 445.0,172.2 440.2,173.8 C434.9,175.5 429.3,177.6 423.9,180.1 C418.4,182.6 412.8,185.5 407.6,188.8 C402.3,192.1 397.2,196.0 392.5,200.1 C388.0,204.0 386.7,206.3 380.0,212.7 C356.3,235.3 239.6,337.5 214.0,363.0 C205.8,371.2 204.2,373.3 198.5,380.0 C190.9,389.1 180.9,400.4 173.0,413.0 C163.8,427.6 155.6,445.8 147.6,463.0 C139.4,480.8 131.1,502.0 124.4,518.0 C119.2,530.4 112.8,542.0 110.8,551.0 C109.5,556.8 109.6,561.2 110.0,566.0 C110.4,570.5 111.3,575.1 113.0,579.0 C114.7,582.7 117.7,586.1 120.0,589.0 C122.0,591.5 123.2,593.2 126.0,595.6 C130.6,599.5 139.3,604.3 146.0,608.6" fill="none" stroke="rgb(153,153,153)" stroke-width="22.5" stroke-linejoin="round" stroke-linecap="butt"/>
<path d="M530.0,194.1 C523.5,191.4 516.4,188.2 510.6,185.9 C506.1,184.1 502.1,182.9 498.3,181.2 C494.9,179.7 492.0,177.9 488.9,176.5 C486.1,175.2 483.6,174.0 480.5,173.2 C476.8,172.2 472.4,171.8 468.2,171.3 C463.7,170.7 458.7,169.5 454.1,169.9 C449.4,170.3 445.0,172.2 440.2,173.8 C434.9,175.5 429.3,177.6 423.9,180.1 C418.4,182.6 412.8,185.5 407.6,188.8 C402.3,192.1 397.2,196.0 392.5,200.1 C388.0,204.0 386.7,206.3 380.0,212.7 C356.3,235.3 239.6,337.5 214.0,363.0 C205.8,371.2 204.2,373.3 198.5,380.0 C190.9,389.1 180.9,400.4 173.0,413.0 C163.8,427.6 155.6,445.8 147.6,463.0 C139.4,480.8 131.1,502.0 124.4,518.0 C119.2,530.4 112.8,542.0 110.8,551.0 C109.5,556.8 109.6,561.2 110.0,566.0 C110.4,570.5 111.3,575.1 113.0,579.0 C114.7,582.7 117.7,586.1 120.0,589.0 C122.0,591.5 123.2,593.2 126.0,595.6 C130.6,599.5 139.3,604.3 146.0,608.6" fill="none" stroke="rgb(147,147,147)" stroke-width="20.6" stroke-linejoin="round" stroke-linecap="butt"/>
<path d="M530.0,194.1 C523.5,191.4 516.4,188.2 510.6,185.9 C506.1,184.1 502.1,182.9 498.3,181.2 C494.9,179.7 492.0,177.9 488.9,176.5 C486.1,175.2 483.6,174.0 480.5,173.2 C476.8,172.2 472.4,171.8 468.2,171.3 C463.7,170.7 458.7,169.5 454.1,169.9 C449.4,170.3 445.0,172.2 440.2,173.8 C434.9,175.5 429.3,177.6 423.9,180.1 C418.4,182.6 412.8,185.5 407.6,188.8 C402.3,192.1 397.2,196.0 392.5,200.1 C388.0,204.0 386.7,206.3 380.0,212.7 C356.3,235.3 239.6,337.5 214.0,363.0 C205.8,371.2 204.2,373.3 198.5,380.0 C190.9,389.1 180.9,400.4 173.0,413.0 C163.8,427.6 155.6,445.8 147.6,463.0 C139.4,480.8 131.1,502.0 124.4,518.0 C119.2,530.4 112.8,542.0 110.8,551.0 C109.5,556.8 109.6,561.2 110.0,566.0 C110.4,570.5 111.3,575.1 113.0,579.0 C114.7,582.7 117.7,586.1 120.0,589.0 C122.0,591.5 123.2,593.2 126.0,595.6 C130.6,599.5 139.3,604.3 146.0,608.6" fill="none" stroke="rgb(141,141,141)" stroke-width="18.8" stroke-linejoin="round" stroke-linecap="butt"/>
<path d="M530.0,194.1 C523.5,191.4 516.4,188.2 510.6,185.9 C506.1,184.1 502.1,182.9 498.3,181.2 C494.9,179.7 492.0,177.9 488.9,176.5 C486.1,175.2 483.6,174.0 480.5,173.2 C476.8,172.2 472.4,171.8 468.2,171.3 C463.7,170.7 458.7,169.5 454.1,169.9 C449.4,170.3 445.0,172.2 440.2,173.8 C434.9,175.5 429.3,177.6 423.9,180.1 C418.4,182.6 412.8,185.5 407.6,188.8 C402.3,192.1 397.2,196.0 392.5,200.1 C388.0,204.0 386.7,206.3 380.0,212.7 C356.3,235.3 239.6,337.5 214.0,363.0 C205.8,371.2 204.2,373.3 198.5,380.0 C190.9,389.1 180.9,400.4 173.0,413.0 C163.8,427.6 155.6,445.8 147.6,463.0 C139.4,480.8 131.1,502.0 124.4,518.0 C119.2,530.4 112.8,542.0 110.8,551.0 C109.5,556.8 109.6,561.2 110.0,566.0 C110.4,570.5 111.3,575.1 113.0,579.0 C114.7,582.7 117.7,586.1 120.0,589.0 C122.0,591.5 123.2,593.2 126.0,595.6 C130.6,599.5 139.3,604.3 146.0,608.6" fill="none" stroke="rgb(135,135,135)" stroke-width="16.9" stroke-linejoin="round" stroke-linecap="butt"/>
<path d="M530.0,194.1 C523.5,191.4 516.4,188.2 510.6,185.9 C506.1,184.1 502.1,182.9 498.3,181.2 C494.9,179.7 492.0,177.9 488.9,176.5 C486.1,175.2 483.6,174.0 480.5,173.2 C476.8,172.2 472.4,171.8 468.2,171.3 C463.7,170.7 458.7,169.5 454.1,169.9 C449.4,170.3 445.0,172.2 440.2,173.8 C434.9,175.5 429.3,177.6 423.9,180.1 C418.4,182.6 412.8,185.5 407.6,188.8 C402.3,192.1 397.2,196.0 392.5,200.1 C388.0,204.0 386.7,206.3 380.0,212.7 C356.3,235.3 239.6,337.5 214.0,363.0 C205.8,371.2 204.2,373.3 198.5,380.0 C190.9,389.1 180.9,400.4 173.0,413.0 C163.8,427.6 155.6,445.8 147.6,463.0 C139.4,480.8 131.1,502.0 124.4,518.0 C119.2,530.4 112.8,542.0 110.8,551.0 C109.5,556.8 109.6,561.2 110.0,566.0 C110.4,570.5 111.3,575.1 113.0,579.0 C114.7,582.7 117.7,586.1 120.0,589.0 C122.0,591.5 123.2,593.2 126.0,595.6 C130.6,599.5 139.3,604.3 146.0,608.6" fill="none" stroke="rgb(128,128,128)" stroke-width="15.0" stroke-linejoin="round" stroke-linecap="butt"/>
<path d="M530.0,194.1 C523.5,191.4 516.4,188.2 510.6,185.9 C506.1,184.1 502.1,182.9 498.3,181.2 C494.9,179.7 492.0,177.9 488.9,176.5 C486.1,175.2 483.6,174.0 480.5,173.2 C476.8,172.2 472.4,171.8 468.2,171.3 C463.7,170.7 458.7,169.5 454.1,169.9 C449.4,170.3 445.0,172.2 440.2,173.8 C434.9,175.5 429.3,177.6 423.9,180.1 C418.4,182.6 412.8,185.5 407.6,188.8 C402.3,192.1 397.2,196.0 392.5,200.1 C388.0,204.0 386.7,206.3 380.0,212.7 C356.3,235.3 239.6,337.5 214.0,363.0 C205.8,371.2 204.2,373.3 198.5,380.0 C190.9,389.1 180.9,400.4 173.0,413.0 C163.8,427.6 155.6,445.8 147.6,463.0 C139.4,480.8 131.1,502.0 124.4,518.0 C119.2,530.4 112.8,542.0 110.8,551.0 C109.5,556.8 109.6,561.2 110.0,566.0 C110.4,570.5 111.3,575.1 113.0,579.0 C114.7,582.7 117.7,586.1 120.0,589.0 C122.0,591.5 123.2,593.2 126.0,595.6 C130.6,599.5 139.3,604.3 146.0,608.6" fill="none" stroke="rgb(120,120,120)" stroke-width="13.1" stroke-linejoin="round" stroke-linecap="butt"/>
<path d="M530.0,194.1 C523.5,191.4 516.4,188.2 510.6,185.9 C506.1,184.1 502.1,182.9 498.3,181.2 C494.9,179.7 492.0,177.9 488.9,176.5 C486.1,175.2 483.6,174.0 480.5,173.2 C476.8,172.2 472.4,171.8 468.2,171.3 C463.7,170.7 458.7,169.5 454.1,169.9 C449.4,170.3 445.0,172.2 440.2,173.8 C434.9,175.5 429.3,177.6 423.9,180.1 C418.4,182.6 412.8,185.5 407.6,188.8 C402.3,192.1 397.2,196.0 392.5,200.1 C388.0,204.0 386.7,206.3 380.0,212.7 C356.3,235.3 239.6,337.5 214.0,363.0 C205.8,371.2 204.2,373.3 198.5,380.0 C190.9,389.1 180.9,400.4 173.0,413.0 C163.8,427.6 155.6,445.8 147.6,463.0 C139.4,480.8 131.1,502.0 124.4,518.0 C119.2,530.4 112.8,542.0 110.8,551.0 C109.5,556.8 109.6,561.2 110.0,566.0 C110.4,570.5 111.3,575.1 113.0,579.0 C114.7,582.7 117.7,586.1 120.0,589.0 C122.0,591.5 123.2,593.2 126.0,595.6 C130.6,599.5 139.3,604.3 146.0,608.6" fill="none" stroke="rgb(112,112,112)" stroke-width="11.2" stroke-linejoin="round" stroke-linecap="butt"/>
<path d="M530.0,194.1 C523.5,191.4 516.4,188.2 510.6,185.9 C506.1,184.1 502.1,182.9 498.3,181.2 C494.9,179.7 492.0,177.9 488.9,176.5 C486.1,175.2 483.6,174.0 480.5,173.2 C476.8,172.2 472.4,171.8 468.2,171.3 C463.7,170.7 458.7,169.5 454.1,169.9 C449.4,170.3 445.0,172.2 440.2,173.8 C434.9,175.5 429.3,177.6 423.9,180.1 C418.4,182.6 412.8,185.5 407.6,188.8 C402.3,192.1 397.2,196.0 392.5,200.1 C388.0,204.0 386.7,206.3 380.0,212.7 C356.3,235.3 239.6,337.5 214.0,363.0 C205.8,371.2 204.2,373.3 198.5,380.0 C190.9,389.1 180.9,400.4 173.0,413.0 C163.8,427.6 155.6,445.8 147.6,463.0 C139.4,480.8 131.1,502.0 124.4,518.0 C119.2,530.4 112.8,542.0 110.8,551.0 C109.5,556.8 109.6,561.2 110.0,566.0 C110.4,570.5 111.3,575.1 113.0,579.0 C114.7,582.7 117.7,586.1 120.0,589.0 C122.0,591.5 123.2,593.2 126.0,595.6 C130.6,599.5 139.3,604.3 146.0,608.6" fill="none" stroke="rgb(103,103,103)" stroke-width="9.4" stroke-linejoin="round" stroke-linecap="butt"/>
<path d="M530.0,194.1 C523.5,191.4 516.4,188.2 510.6,185.9 C506.1,184.1 502.1,182.9 498.3,181.2 C494.9,179.7 492.0,177.9 488.9,176.5 C486.1,175.2 483.6,174.0 480.5,173.2 C476.8,172.2 472.4,171.8 468.2,171.3 C463.7,170.7 458.7,169.5 454.1,169.9 C449.4,170.3 445.0,172.2 440.2,173.8 C434.9,175.5 429.3,177.6 423.9,180.1 C418.4,182.6 412.8,185.5 407.6,188.8 C402.3,192.1 397.2,196.0 392.5,200.1 C388.0,204.0 386.7,206.3 380.0,212.7 C356.3,235.3 239.6,337.5 214.0,363.0 C205.8,371.2 204.2,373.3 198.5,380.0 C190.9,389.1 180.9,400.4 173.0,413.0 C163.8,427.6 155.6,445.8 147.6,463.0 C139.4,480.8 131.1,502.0 124.4,518.0 C119.2,530.4 112.8,542.0 110.8,551.0 C109.5,556.8 109.6,561.2 110.0,566.0 C110.4,570.5 111.3,575.1 113.0,579.0 C114.7,582.7 117.7,586.1 120.0,589.0 C122.0,591.5 123.2,593.2 126.0,595.6 C130.6,599.5 139.3,604.3 146.0,608.6" fill="none" stroke="rgb(93,93,93)" stroke-width="7.5" stroke-linejoin="round" stroke-linecap="butt"/>
<path d="M530.0,194.1 C523.5,191.4 516.4,188.2 510.6,185.9 C506.1,184.1 502.1,182.9 498.3,181.2 C494.9,179.7 492.0,177.9 488.9,176.5 C486.1,175.2 483.6,174.0 480.5,173.2 C476.8,172.2 472.4,171.8 468.2,171.3 C463.7,170.7 458.7,169.5 454.1,169.9 C449.4,170.3 445.0,172.2 440.2,173.8 C434.9,175.5 429.3,177.6 423.9,180.1 C418.4,182.6 412.8,185.5 407.6,188.8 C402.3,192.1 397.2,196.0 392.5,200.1 C388.0,204.0 386.7,206.3 380.0,212.7 C356.3,235.3 239.6,337.5 214.0,363.0 C205.8,371.2 204.2,373.3 198.5,380.0 C190.9,389.1 180.9,400.4 173.0,413.0 C163.8,427.6 155.6,445.8 147.6,463.0 C139.4,480.8 131.1,502.0 124.4,518.0 C119.2,530.4 112.8,542.0 110.8,551.0 C109.5,556.8 109.6,561.2 110.0,566.0 C110.4,570.5 111.3,575.1 113.0,579.0 C114.7,582.7 117.7,586.1 120.0,589.0 C122.0,591.5 123.2,593.2 126.0,595.6 C130.6,599.5 139.3,604.3 146.0,608.6" fill="none" stroke="rgb(82,82,82)" stroke-width="5.6" stroke-linejoin="round" stroke-linecap="butt"/>
<path d="M530.0,194.1 C523.5,191.4 516.4,188.2 510.6,185.9 C506.1,184.1 502.1,182.9 498.3,181.2 C494.9,179.7 492.0,177.9 488.9,176.5 C486.1,175.2 483.6,174.0 480.5,173.2 C476.8,172.2 472.4,171.8 468.2,171.3 C463.7,170.7 458.7,169.5 454.1,169.9 C449.4,170.3 445.0,172.2 440.2,173.8 C434.9,175.5 429.3,177.6 423.9,180.1 C418.4,182.6 412.8,185.5 407.6,188.8 C402.3,192.1 397.2,196.0 392.5,200.1 C388.0,204.0 386.7,206.3 380.0,212.7 C356.3,235.3 239.6,337.5 214.0,363.0 C205.8,371.2 204.2,373.3 198.5,380.0 C190.9,389.1 180.9,400.4 173.0,413.0 C163.8,427.6 155.6,445.8 147.6,463.0 C139.4,480.8 131.1,502.0 124.4,518.0 C119.2,530.4 112.8,542.0 110.8,551.0 C109.5,556.8 109.6,561.2 110.0,566.0 C110.4,570.5 111.3,575.1 113.0,579.0 C114.7,582.7 117.7,586.1 120.0,589.0 C122.0,591.5 123.2,593.2 126.0,595.6 C130.6,599.5 139.3,604.3 146.0,608.6" fill="none" stroke="rgb(68,68,68)" stroke-width="3.8" stroke-linejoin="round" stroke-linecap="butt"/>
<path d="M530.0,194.1 C523.5,191.4 516.4,188.2 510.6,185.9 C506.1,184.1 502.1,182.9 498.3,181.2 C494.9,179.7 492.0,177.9 488.9,176.5 C486.1,175.2 483.6,174.0 480.5,173.2 C476.8,172.2 472.4,171.8 468.2,171.3 C463.7,170.7 458.7,169.5 454.1,169.9 C449.4,170.3 445.0,172.2 440.2,173.8 C434.9,175.5 429.3,177.6 423.9,180.1 C418.4,182.6 412.8,185.5 407.6,188.8 C402.3,192.1 397.2,196.0 392.5,200.1 C388.0,204.0 386.7,206.3 380.0,212.7 C356.3,235.3 239.6,337.5 214.0,363.0 C205.8,371.2 204.2,373.3 198.5,380.0 C190.9,389.1 180.9,400.4 173.0,413.0 C163.8,427.6 155.6,445.8 147.6,463.0 C139.4,480.8 131.1,502.0 124.4,518.0 C119.2,530.4 112.8,542.0 110.8,551.0 C109.5,556.8 109.6,561.2 110.0,566.0 C110.4,570.5 111.3,575.1 113.0,579.0 C114.7,582.7 117.7,586.1 120.0,589.0 C122.0,591.5 123.2,593.2 126.0,595.6 C130.6,599.5 139.3,604.3 146.0,608.6" fill="none" stroke="rgb(47,47,47)" stroke-width="1.9" stroke-linejoin="round" stroke-linecap="butt"/>
<path d="M530.0,194.1 C523.5,191.4 516.4,188.2 510.6,185.9 C506.1,184.1 502.1,182.9 498.3,181.2 C494.9,179.7 492.0,177.9 488.9,176.5 C486.1,175.2 483.6,174.0 480.5,173.2 C476.8,172.2 472.4,171.8 468.2,171.3 C463.7,170.7 458.7,169.5 454.1,169.9 C449.4,170.3 445.0,172.2 440.2,173.8 C434.9,175.5 429.3,177.6 423.9,180.1 C418.4,182.6 412.8,185.5 407.6,188.8 C402.3,192.1 397.2,196.0 392.5,200.1 C388.0,204.0 386.7,206.3 380.0,212.7 C356.3,235.3 239.6,337.5 214.0,363.0 C205.8,371.2 204.2,373.3 198.5,380.0 C190.9,389.1 180.9,400.4 173.0,413.0 C163.8,427.6 155.6,445.8 147.6,463.0 C139.4,480.8 131.1,502.0 124.4,518.0 C119.2,530.4 112.8,542.0 110.8,551.0 C109.5,556.8 109.6,561.2 110.0,566.0 C110.4,570.5 111.3,575.1 113.0,579.0 C114.7,582.7 117.7,586.1 120.0,589.0 C122.0,591.5 123.2,593.2 126.0,595.6 C130.6,599.5 139.3,604.3 146.0,608.6" fill="none" stroke="rgb(20,20,20)" stroke-width="1.2"/></g>
</g></g>
<path d="M468.2,171.3 C463.5,172.6 458.7,173.4 454.1,175.1 C449.3,176.9 443.9,180.1 440.0,182.1 C437.2,183.6 435.6,184.1 432.7,186.0 C427.8,189.2 419.7,196.1 413.9,200.8 C408.9,204.9 405.0,208.2 400.0,212.7 C393.9,218.2 389.7,222.4 380.0,231.5 C353.9,255.9 257.9,343.5 235.4,365.7 C228.3,372.7 226.6,374.8 221.7,380.0 C216.0,386.1 208.7,394.0 203.5,400.0 C199.4,404.8 197.1,406.9 192.9,413.2 C184.4,426.0 167.3,458.9 159.7,475.1 C155.0,485.1 153.1,491.1 149.6,500.0 C145.6,510.2 141.8,522.1 137.4,533.0 C133.0,543.9 127.8,554.6 123.0,565.4 L123.0,565.4 C132.1,571.4 143.5,578.7 150.3,583.4 C154.4,586.2 155.7,587.4 160.0,590.4 C168.5,596.4 187.9,609.9 197.8,616.5 C204.1,620.7 207.9,623.2 213.5,626.6 C219.6,630.3 225.5,633.6 233.1,637.6 C243.1,642.8 258.0,650.3 268.4,654.9 C276.4,658.4 282.3,660.6 290.0,663.5 C298.7,666.8 308.1,670.1 317.9,673.6 C328.8,677.5 337.8,680.8 352.4,685.8 C377.5,694.4 424.9,710.3 455.3,720.0 C479.3,727.7 499.4,733.5 520.0,740.0 C538.8,746.0 559.6,752.5 573.9,757.5 C583.4,760.8 589.3,764.3 597.6,766.3 C606.4,768.4 616.6,769.4 625.3,769.7 C633.1,770.0 642.0,769.5 647.4,768.6 C650.7,768.0 652.2,767.3 655.1,766.3 C659.2,764.8 664.6,762.4 669.5,760.3 C674.6,758.1 679.8,755.5 685.0,753.1 L685.0,753.1 C687.2,750.1 689.1,747.6 691.6,744.2 C694.8,739.8 699.0,733.9 702.7,728.8 L702.7,728.8 L732.5,671.6 L746.6,643.3 L752.8,615.0 L752.8,582.2 L747.5,553.9 L673.8,307.9 L669.4,299.3 L659.4,276.3 L645.0,256.1 L635.0,247.5 L619.1,232.4 L610.5,229.5 L610.5,229.5 L584.6,216.6 L558.8,205.8 L530.0,194.1 L530.0,194.1 C523.5,191.4 516.4,188.2 510.6,185.9 C506.1,184.1 502.1,182.9 498.3,181.2 C494.9,179.7 492.0,177.9 488.9,176.5 C486.1,175.2 483.6,174.0 480.5,173.2 C476.8,172.2 472.3,171.9 468.2,171.3 Z" fill="url(#innerg)"/>
<path d="M468.2,171.3 C463.5,172.6 458.7,173.4 454.1,175.1 C449.3,176.9 443.9,180.1 440.0,182.1 C437.2,183.6 435.6,184.1 432.7,186.0 C427.8,189.2 419.7,196.1 413.9,200.8 C408.9,204.9 405.0,208.2 400.0,212.7 C393.9,218.2 389.7,222.4 380.0,231.5 C353.9,255.9 257.9,343.5 235.4,365.7 C228.3,372.7 226.6,374.8 221.7,380.0 C216.0,386.1 208.7,394.0 203.5,400.0 C199.4,404.8 197.1,406.9 192.9,413.2 C184.4,426.0 167.3,458.9 159.7,475.1 C155.0,485.1 153.1,491.1 149.6,500.0 C145.6,510.2 141.8,522.1 137.4,533.0 C133.0,543.9 127.8,554.6 123.0,565.4 L123.0,565.4 C132.1,571.4 143.5,578.7 150.3,583.4 C154.4,586.2 155.7,587.4 160.0,590.4 C168.5,596.4 187.9,609.9 197.8,616.5 C204.1,620.7 207.9,623.2 213.5,626.6 C219.6,630.3 225.5,633.6 233.1,637.6 C243.1,642.8 258.0,650.3 268.4,654.9 C276.4,658.4 282.3,660.6 290.0,663.5 C298.7,666.8 308.1,670.1 317.9,673.6 C328.8,677.5 337.8,680.8 352.4,685.8 C377.5,694.4 424.9,710.3 455.3,720.0 C479.3,727.7 499.4,733.5 520.0,740.0 C538.8,746.0 559.6,752.5 573.9,757.5 C583.4,760.8 589.3,764.3 597.6,766.3 C606.4,768.4 616.6,769.4 625.3,769.7 C633.1,770.0 642.0,769.5 647.4,768.6 C650.7,768.0 652.2,767.3 655.1,766.3 C659.2,764.8 664.6,762.4 669.5,760.3 C674.6,758.1 679.8,755.5 685.0,753.1 L685.0,753.1 C687.2,750.1 689.1,747.6 691.6,744.2 C694.8,739.8 699.0,733.9 702.7,728.8 L702.7,728.8 L732.5,671.6 L746.6,643.3 L752.8,615.0 L752.8,582.2 L747.5,553.9 L673.8,307.9 L669.4,299.3 L659.4,276.3 L645.0,256.1 L635.0,247.5 L619.1,232.4 L610.5,229.5 L610.5,229.5 L584.6,216.6 L558.8,205.8 L530.0,194.1 L530.0,194.1 C523.5,191.4 516.4,188.2 510.6,185.9 C506.1,184.1 502.1,182.9 498.3,181.2 C494.9,179.7 492.0,177.9 488.9,176.5 C486.1,175.2 483.6,174.0 480.5,173.2 C476.8,172.2 472.3,171.9 468.2,171.3 Z" fill="url(#cornerg)"/>
<path d="M468.2,171.3 C463.5,172.6 458.7,173.4 454.1,175.1 C449.3,176.9 443.9,180.1 440.0,182.1 C437.2,183.6 435.6,184.1 432.7,186.0 C427.8,189.2 419.7,196.1 413.9,200.8 C408.9,204.9 405.0,208.2 400.0,212.7 C393.9,218.2 389.7,222.4 380.0,231.5 C353.9,255.9 257.9,343.5 235.4,365.7 C228.3,372.7 226.6,374.8 221.7,380.0 C216.0,386.1 208.7,394.0 203.5,400.0 C199.4,404.8 197.1,406.9 192.9,413.2 C184.4,426.0 167.3,458.9 159.7,475.1 C155.0,485.1 153.1,491.1 149.6,500.0 C145.6,510.2 141.8,522.1 137.4,533.0 C133.0,543.9 127.8,554.6 123.0,565.4 L123.0,565.4 C132.1,571.4 143.5,578.7 150.3,583.4 C154.4,586.2 155.7,587.4 160.0,590.4 C168.5,596.4 187.9,609.9 197.8,616.5 C204.1,620.7 207.9,623.2 213.5,626.6 C219.6,630.3 225.5,633.6 233.1,637.6 C243.1,642.8 258.0,650.3 268.4,654.9 C276.4,658.4 282.3,660.6 290.0,663.5 C298.7,666.8 308.1,670.1 317.9,673.6 C328.8,677.5 337.8,680.8 352.4,685.8 C377.5,694.4 424.9,710.3 455.3,720.0 C479.3,727.7 499.4,733.5 520.0,740.0 C538.8,746.0 559.6,752.5 573.9,757.5 C583.4,760.8 589.3,764.3 597.6,766.3 C606.4,768.4 616.6,769.4 625.3,769.7 C633.1,770.0 642.0,769.5 647.4,768.6 C650.7,768.0 652.2,767.3 655.1,766.3 C659.2,764.8 664.6,762.4 669.5,760.3 C674.6,758.1 679.8,755.5 685.0,753.1 L685.0,753.1 C687.2,750.1 689.1,747.6 691.6,744.2 C694.8,739.8 699.0,733.9 702.7,728.8 L702.7,728.8 L732.5,671.6 L746.6,643.3 L752.8,615.0 L752.8,582.2 L747.5,553.9 L673.8,307.9 L669.4,299.3 L659.4,276.3 L645.0,256.1 L635.0,247.5 L619.1,232.4 L610.5,229.5 L610.5,229.5 L584.6,216.6 L558.8,205.8 L530.0,194.1 L530.0,194.1 C523.5,191.4 516.4,188.2 510.6,185.9 C506.1,184.1 502.1,182.9 498.3,181.2 C494.9,179.7 492.0,177.9 488.9,176.5 C486.1,175.2 483.6,174.0 480.5,173.2 C476.8,172.2 472.3,171.9 468.2,171.3 Z" fill="url(#topg)"/>
<path d="M530.0,194.1 L558.8,205.8 L584.6,216.6 L610.5,229.5 L610.5,229.5 L619.1,232.4 L635.0,247.5 L645.0,256.1 L659.4,276.3 L669.4,299.3 L673.8,307.9 L747.5,553.9 L752.8,582.2 L752.8,615.0 L746.6,643.3 L732.5,671.6 L702.7,728.8 L702.7,728.8 L691.4,727.6 L691.4,727.6 L722.7,676.9 L736.0,646.8 L743.1,618.5 L743.1,582.2 L737.8,554.8 L662.3,303.6 L659.4,293.5 L652.2,276.3 L646.4,267.6 L633.5,251.8 L624.9,243.2 L610.5,229.5 Z" fill="#878787"/>
<path d="M671.7,736.5 L691.4,727.6 L681.7,744.2 L675,756.4 L669.5,762 L656.3,765.2 Z" fill="#8e8e8e"/>
<path d="M691.4,727.6 L702.7,728.8 L691.6,744.2 L685,753.1 L669.5,760.3 L675,756.4 L681.7,744.2 Z" fill="#8a8a8a"/>
<path d="M656.3,765.2 L669.5,760.3 L685,753.1 L671.7,764.1 L645.2,777.4 L644.1,777.4 Z" fill="#808080"/>
<path d="M371.7,537.7 L300,542.4 L164.7,549.6 C172.6,530.7 179.2,512.0 188.5,492.8 C198.7,471.8 212.8,445.5 224.0,428.7 C232.0,416.8 239.6,408.3 247.0,400.0 C253.2,393.1 256.3,390.4 265.0,382.0 C286.6,361.0 352.4,299.6 380.0,273.8 C395.5,259.3 405.3,250.4 416.4,240.0 C425.9,231.1 436.8,220.5 442.7,215.2 C445.6,212.6 446.7,211.7 449.4,209.4 C453.2,206.1 458.2,201.0 463.5,197.6 C469.1,193.9 476.4,190.5 482.3,188.2 C487.2,186.2 492.4,184.6 496.4,184.0 C499.3,183.6 500.7,183.4 504.0,184.0 C510.8,185.3 524.1,192.3 534.2,196.4  Z" fill="#717171"/>
<path d="M371.7,537.7 L534.2,196.4 L558.8,205.8 L584.6,216.6 L610.5,229.5 L624.9,243.2 L633.5,251.8 L646.4,267.6 L652.2,276.3 L659.4,293.5 L662.3,303.6 L737.8,554.8 L743.1,582.2 L743.1,618.5 L736.0,646.8 L722.7,676.9 L691.4,727.6  Z" fill="#aaaaaa"/>
<path d="M371.7,537.7 L691.4,727.6 C687.8,729.1 684.0,730.6 680.6,732.1 C677.5,733.5 675.0,735.4 671.7,736.5 C667.8,737.8 663.5,738.4 658.5,738.7 C652.1,739.1 644.4,738.9 636.3,737.6 C626.3,736.0 613.2,731.7 603.2,728.8 C594.7,726.3 590.6,724.9 580.0,721.4 C556.7,713.8 503.6,695.6 468.5,684.2 C437.3,674.0 404.5,663.7 380.0,656.0 C362.6,650.5 348.6,646.6 335.2,642.0 C324.2,638.3 314.7,634.9 305.4,631.0 C297.0,627.5 288.9,623.3 281.9,620.0 C276.1,617.3 272.1,615.6 266.2,612.6 C258.5,608.7 248.5,603.3 239.6,598.4 C230.5,593.3 221.1,587.9 212.2,582.5 C203.5,577.2 194.7,572.0 186.5,566.5 C178.8,561.3 171.8,555.9 164.4,550.6  L300,542.4 Z" fill="#535353"/>
<path d="M468.2,171.3 C463.5,172.6 458.7,173.4 454.1,175.1 C449.3,176.9 443.9,180.1 440.0,182.1 C437.2,183.6 435.6,184.1 432.7,186.0 C427.8,189.2 419.7,196.1 413.9,200.8 C408.9,204.9 405.0,208.2 400.0,212.7 C393.9,218.2 389.7,222.4 380.0,231.5 C353.9,255.9 257.9,343.5 235.4,365.7 C228.3,372.7 226.6,374.8 221.7,380.0 C216.0,386.1 208.7,394.0 203.5,400.0 C199.4,404.8 197.1,406.9 192.9,413.2 C184.4,426.0 167.3,458.9 159.7,475.1 C155.0,485.1 153.1,491.1 149.6,500.0 C145.6,510.2 141.8,522.1 137.4,533.0 C133.0,543.9 127.8,554.6 123.0,565.4" fill="none" stroke="#0d0d0d" stroke-width="1.9" stroke-linejoin="round"/><path d="M123.0,565.4 C122.0,570.3 120.3,575.6 120.0,580.0 C119.7,583.6 120.3,586.7 120.5,590.0" fill="none" stroke="#0d0d0d" stroke-width="1.9" stroke-linejoin="round"/><path d="M110.8,554.0 C114.9,557.8 117.9,561.4 123.0,565.4 C130.1,571.0 143.5,578.7 150.3,583.4 C154.4,586.2 155.7,587.4 160.0,590.4 C168.5,596.4 187.9,609.9 197.8,616.5 C204.1,620.7 207.9,623.2 213.5,626.6 C219.6,630.3 225.5,633.6 233.1,637.6 C243.1,642.8 258.0,650.3 268.4,654.9 C276.4,658.4 282.3,660.6 290.0,663.5 C298.7,666.8 308.1,670.1 317.9,673.6 C328.8,677.5 337.8,680.8 352.4,685.8 C377.5,694.4 424.9,710.3 455.3,720.0 C479.3,727.7 499.4,733.5 520.0,740.0 C538.8,746.0 559.6,752.5 573.9,757.5 C583.4,760.8 589.3,764.3 597.6,766.3 C606.4,768.4 616.6,769.4 625.3,769.7 C633.1,770.0 642.0,769.5 647.4,768.6 C650.7,768.0 652.2,767.3 655.1,766.3 C659.2,764.8 664.6,762.4 669.5,760.3 C674.6,758.1 679.8,755.5 685.0,753.1" fill="none" stroke="#0d0d0d" stroke-width="1.9" stroke-linejoin="round"/><path d="M164.7,549.6 C172.6,530.7 179.2,512.0 188.5,492.8 C198.7,471.8 212.8,445.5 224.0,428.7 C232.0,416.8 239.6,408.3 247.0,400.0 C253.2,393.1 256.3,390.4 265.0,382.0 C286.6,361.0 352.4,299.6 380.0,273.8 C395.5,259.3 405.3,250.4 416.4,240.0 C425.9,231.1 436.8,220.5 442.7,215.2 C445.6,212.6 446.7,211.7 449.4,209.4 C453.2,206.1 458.2,201.0 463.5,197.6 C469.1,193.9 476.4,190.5 482.3,188.2 C487.2,186.2 492.4,184.6 496.4,184.0 C499.3,183.6 500.7,183.4 504.0,184.0 C510.8,185.3 524.1,192.3 534.2,196.4" fill="none" stroke="#0d0d0d" stroke-width="1.9" stroke-linejoin="round"/><path d="M691.4,727.6 C687.8,729.1 684.0,730.6 680.6,732.1 C677.5,733.5 675.0,735.4 671.7,736.5 C667.8,737.8 663.5,738.4 658.5,738.7 C652.1,739.1 644.4,738.9 636.3,737.6 C626.3,736.0 613.2,731.7 603.2,728.8 C594.7,726.3 590.6,724.9 580.0,721.4 C556.7,713.8 503.6,695.6 468.5,684.2 C437.3,674.0 404.5,663.7 380.0,656.0 C362.6,650.5 348.6,646.6 335.2,642.0 C324.2,638.3 314.7,634.9 305.4,631.0 C297.0,627.5 288.9,623.3 281.9,620.0 C276.1,617.3 272.1,615.6 266.2,612.6 C258.5,608.7 248.5,603.3 239.6,598.4 C230.5,593.3 221.1,587.9 212.2,582.5 C203.5,577.2 194.7,572.0 186.5,566.5 C178.8,561.3 171.8,555.9 164.4,550.6" fill="none" stroke="#0d0d0d" stroke-width="1.9" stroke-linejoin="round"/><path d="M534.2,196.4 L558.8,205.8 L584.6,216.6 L610.5,229.5 L624.9,243.2 L633.5,251.8 L646.4,267.6 L652.2,276.3 L659.4,293.5 L662.3,303.6 L737.8,554.8 L743.1,582.2 L743.1,618.5 L736.0,646.8 L722.7,676.9 L691.4,727.6" fill="none" stroke="#0d0d0d" stroke-width="1.9" stroke-linejoin="round"/><path d="M371.7,537.7 L300.0,542.4 L164.7,549.6" fill="none" stroke="#0d0d0d" stroke-width="1.9" stroke-linejoin="round"/><path d="M534.2,196.4 L371.7,537.7 L691.4,727.6" fill="none" stroke="#0d0d0d" stroke-width="1.9" stroke-linejoin="round"/><path d="M454.1,169.9 C458.8,170.4 463.7,170.7 468.2,171.3 C472.4,171.8 476.8,172.2 480.5,173.2 C483.6,174.0 486.1,175.2 488.9,176.5 C492.0,177.9 494.9,179.7 498.3,181.2 C502.1,182.9 506.1,184.1 510.6,185.9 C516.4,188.2 523.5,191.4 530.0,194.1 L530.0,194.1 L558.8,205.8 L584.6,216.6 L610.5,229.5 L610.5,229.5 L619.1,232.4 L635.0,247.5 L645.0,256.1 L659.4,276.3 L669.4,299.3 L673.8,307.9 L747.5,553.9 L752.8,582.2 L752.8,615.0 L746.6,643.3 L732.5,671.6 L702.7,728.8 L702.7,728.8 C699.0,733.9 694.8,739.8 691.6,744.2 C689.1,747.6 687.8,750.1 685.0,753.1 C681.5,756.8 677.1,760.6 671.7,764.1 C664.6,768.7 652.2,774.3 645.2,777.4 C640.8,779.4 637.8,780.3 634.1,781.8 " fill="none" stroke="#0d0d0d" stroke-width="1.9" stroke-linejoin="round"/><path d="M393.8,199.5 L405.1,198.9 L413.2,200.8 L442.7,214.5" fill="none" stroke="#0d0d0d" stroke-width="1.9" stroke-linejoin="round"/><path d="M214.0,363.0 L235.4,365.7 L265.0,382.0" fill="none" stroke="#0d0d0d" stroke-width="1.9" stroke-linejoin="round"/><path d="M147.6,463.0 L159.7,475.0 L188.5,492.8" fill="none" stroke="#0d0d0d" stroke-width="1.9" stroke-linejoin="round"/><path d="M124.4,518.0 L137.4,533.0 L164.7,549.6" fill="none" stroke="#0d0d0d" stroke-width="1.9" stroke-linejoin="round"/><path d="M164.7,549.6 C159.9,560.9 153.1,572.8 150.3,583.4 C148.0,592.0 148.4,599.7 147.5,607.9" fill="none" stroke="#0d0d0d" stroke-width="1.9" stroke-linejoin="round"/><path d="M212.2,582.5 C209.8,588.3 207.3,594.3 204.9,600.0 C202.5,605.6 199.8,611.5 197.8,616.5 C196.2,620.5 194.7,623.5 193.9,627.4 C193.0,631.6 193.4,636.3 193.1,640.8" fill="none" stroke="#0d0d0d" stroke-width="1.9" stroke-linejoin="round"/><path d="M335.2,642.0 L317.9,674.9 L300.7,695.2" fill="none" stroke="#0d0d0d" stroke-width="1.9" stroke-linejoin="round"/><path d="M590.5,726.5 L572.9,757.5 L550.0,775.4" fill="none" stroke="#0d0d0d" stroke-width="1.9" stroke-linejoin="round"/><path d="M671.7,736.5 C666.6,746.1 661.7,757.9 656.3,765.2 C652.4,770.5 648.2,773.3 644.1,777.4" fill="none" stroke="#0d0d0d" stroke-width="1.9" stroke-linejoin="round"/><path d="M691.4,727.6 C688.2,733.1 684.6,739.1 681.7,744.2 C679.2,748.6 677.4,753.2 675.0,756.4 C673.2,758.8 671.3,760.1 669.5,762.0" fill="none" stroke="#0d0d0d" stroke-width="1.9" stroke-linejoin="round"/><path d="M691.4,727.6 L702.7,723.8" fill="none" stroke="#0d0d0d" stroke-width="1.9" stroke-linejoin="round"/><path d="M656.3,765.2 C660.7,763.6 665.0,762.2 669.5,760.3 C674.5,758.2 681.2,756.2 685.0,753.1 C688.1,750.6 689.4,747.2 691.6,744.2" fill="none" stroke="#0d0d0d" stroke-width="1.9" stroke-linejoin="round"/><path d="M662.3,302.9 L672.3,304.3" fill="none" stroke="#0d0d0d" stroke-width="1.9" stroke-linejoin="round"/><path d="M737.8,554.8 L747.5,553.9" fill="none" stroke="#0d0d0d" stroke-width="1.9" stroke-linejoin="round"/><path d="M722.7,676.9 L732.5,671.6" fill="none" stroke="#0d0d0d" stroke-width="1.9" stroke-linejoin="round"/>

</svg>
<div id="rpanel" class="abs"></div>
<!-- splitter -->
<div class="abs" style="left:861px;top:0;width:1px;height:904px;background:#f6f6f6"></div>
<div class="abs" style="left:862px;top:0;width:1px;height:904px;background:#dcdcdc"></div>
<div class="abs" style="left:863px;top:0;width:1px;height:904px;background:#f8f8f8"></div>
<div class="abs" style="left:864px;top:0;width:3px;height:904px;background:#5e5e5e"></div>
<div class="abs" style="left:862px;top:-4px;width:7px;height:7px;border-radius:50%;background:#6a6a6a"></div>
<div class="abs" style="left:867px;top:0;width:1px;height:904px;background:#f0f0f0"></div>
<div id="rtitle" class="abs"></div>
<div class="abs" style="left:1013px;top:4px;font-size:15px;color:#8e8e8e;line-height:17px">Dimensions</div>
<svg class="abs" style="left:868px;top:0" width="408" height="904">
 <!-- table icon -->
 <g transform="translate(-868,0)">
  <rect x="872.5" y="6.5" width="15" height="12" rx="1.5" fill="#f6f6f2" stroke="#777" stroke-width="1"/>
  <rect x="873" y="9" width="14" height="1.2" fill="#2e3436"/>
  <rect x="873" y="12" width="14" height="1.2" fill="#2e3436"/>
  <rect x="873" y="15" width="14" height="1.2" fill="#2e3436"/>
  <rect x="876.8" y="7" width="1.2" height="11" fill="#2e3436"/>
 </g>
 <g transform="translate(-868,0)" fill="none" stroke="#9a9a9a" stroke-width="1.3">
  <circle cx="1223" cy="12" r="5" fill="#f3f3f3" stroke="#e8e8e8" stroke-width="1"/>
  <circle cx="1241" cy="12" r="5" fill="#f3f3f3" stroke="#e8e8e8" stroke-width="1"/>
  <circle cx="1259" cy="12" r="5" fill="#f3f3f3" stroke="#e8e8e8" stroke-width="1"/>
  <polyline points="1219.8,10.6 1223,13.8 1226.2,10.6"/>
  <polyline points="1237.8,13.4 1241,10.2 1244.2,13.4"/>
  <path d="M1256.2,9.2 L1261.8,14.8 M1261.8,9.2 L1256.2,14.8"/>
 </g>
</svg>
<!-- right border -->
<div class="abs" style="left:1272px;top:0;width:1px;height:904px;background:#e8e8e8"></div>
<div class="abs" style="left:1273px;top:0;width:1px;height:904px;background:#505050"></div>
<div class="abs" style="left:1274px;top:0;width:2px;height:904px;background:#007300"></div>
<!-- Contenu -->
<div class="abs" style="left:874px;top:30px;font-size:15px;color:#1a1a1a;line-height:17px">Contenu</div>
<div class="abs" style="left:874px;top:46px;width:9px;height:1px;background:#1a1a1a"></div>
<div class="abs" style="left:938px;top:29px;width:324px;height:18px;background:#fff;border:1px solid #c4c4c4;border-bottom-color:#dedede;border-radius:3px;"></div>
<div class="abs" style="left:943px;top:30px;font-size:14.8px;letter-spacing:0.4px;color:#111;line-height:17px">Length</div>
<!-- table frame -->
<div class="abs" style="left:876px;top:58px;width:371px;height:860px;border:1px solid #a9a9a9;border-radius:3px 3px 0 0;background:linear-gradient(to bottom,#dcdcdc 0px,#d9d8d7 26px,#cdcccb 98px,#c7c6c5 142px,#c7c6c5 904px)"></div>
<div class="abs" style="left:877px;top:59px;width:371px;height:18px;background:linear-gradient(to bottom,#c9c9c9 0px,#d8d8d8 1px,#dcdbda 2px,#dcdbda 100%);border-radius:2px 2px 0 0"></div>
<div class="abs" style="left:877px;top:61px;width:48px;height:17px;background:linear-gradient(to bottom,#dcdbda,#d9d8d7)"></div>
<div class="abs" style="left:925px;top:76px;width:323px;height:1px;background:#d2d2d2"></div>
<div class="abs" style="left:925px;top:77px;width:323px;height:1px;background:#ffffff"></div>
<div class="abs" style="left:925px;top:77px;width:1px;height:830px;background:#ffffff"></div>
<div class="abs" style="left:926px;top:78px;width:322px;height:830px;background:#ffffff"></div>
<div class="abs" style="left:1027px;top:79px;width:99px;height:59px;background:#ffff9f"></div>
<svg class="abs" style="left:0;top:0" width="1276" height="904">
<rect x="926" y="78" width="322" height="1" fill="#b9b9b9"/>
<rect x="926" y="108" width="322" height="1" fill="#b9b9b9"/>
<rect x="926" y="138" width="322" height="1" fill="#b9b9b9"/>
<rect x="926" y="168" width="322" height="1" fill="#b9b9b9"/>
<rect x="926" y="198" width="322" height="1" fill="#b9b9b9"/>
<rect x="926" y="228" width="322" height="1" fill="#b9b9b9"/>
<rect x="926" y="258" width="322" height="1" fill="#b9b9b9"/>
<rect x="926" y="288" width="322" height="1" fill="#b9b9b9"/>
<rect x="926" y="318" width="322" height="1" fill="#b9b9b9"/>
<rect x="926" y="348" width="322" height="1" fill="#b9b9b9"/>
<rect x="926" y="378" width="322" height="1" fill="#b9b9b9"/>
<rect x="926" y="408" width="322" height="1" fill="#b9b9b9"/>
<rect x="926" y="438" width="322" height="1" fill="#b9b9b9"/>
<rect x="926" y="468" width="322" height="1" fill="#b9b9b9"/>
<rect x="926" y="498" width="322" height="1" fill="#b9b9b9"/>
<rect x="926" y="528" width="322" height="1" fill="#b9b9b9"/>
<rect x="926" y="558" width="322" height="1" fill="#b9b9b9"/>
<rect x="926" y="588" width="322" height="1" fill="#b9b9b9"/>
<rect x="926" y="618" width="322" height="1" fill="#b9b9b9"/>
<rect x="926" y="648" width="322" height="1" fill="#b9b9b9"/>
<rect x="926" y="678" width="322" height="1" fill="#b9b9b9"/>
<rect x="926" y="708" width="322" height="1" fill="#b9b9b9"/>
<rect x="926" y="738" width="322" height="1" fill="#b9b9b9"/>
<rect x="926" y="768" width="322" height="1" fill="#b9b9b9"/>
<rect x="926" y="798" width="322" height="1" fill="#b9b9b9"/>
<rect x="926" y="828" width="322" height="1" fill="#b9b9b9"/>
<rect x="926" y="858" width="322" height="1" fill="#b9b9b9"/>
<rect x="926" y="888" width="322" height="1" fill="#b9b9b9"/>
<rect x="926" y="918" width="322" height="1" fill="#b9b9b9"/>
<rect x="926" y="78" width="1" height="830" fill="#b9b9b9"/>
<rect x="1026" y="78" width="1" height="830" fill="#b9b9b9"/>
<rect x="1126" y="78" width="1" height="830" fill="#b9b9b9"/>
<rect x="1226" y="78" width="1" height="830" fill="#b9b9b9"/>
 <g fill="#6e6e6e">
  <rect x="1025" y="64" width="1" height="1"/><rect x="1025" y="67" width="1" height="1"/><rect x="1025" y="70" width="1" height="1"/>
  <rect x="1225" y="64" width="1" height="1"/><rect x="1225" y="67" width="1" height="1"/><rect x="1225" y="70" width="1" height="1"/>
  <rect x="1125" y="64" width="1" height="1"/><rect x="1125" y="67" width="1" height="1"/><rect x="1125" y="70" width="1" height="1"/>
 </g>
 <g fill="#ffffff" opacity="0.6">
  <rect x="1026" y="65" width="1" height="1"/><rect x="1026" y="68" width="1" height="1"/><rect x="1026" y="71" width="1" height="1"/>
  <rect x="1226" y="65" width="1" height="1"/><rect x="1226" y="68" width="1" height="1"/><rect x="1226" y="71" width="1" height="1"/>
  <rect x="1126" y="65" width="1" height="1"/><rect x="1126" y="68" width="1" height="1"/><rect x="1126" y="71" width="1" height="1"/>
 </g>
</svg>
<div class="ct" style="left:972px;top:60px">A</div>
<div class="ct" style="left:1072px;top:60px">B</div>
<div class="ct" style="left:1172px;top:60px">C</div>
<div class="rn" style="top:85px">1</div>
<div class="dots" style="top:107px"></div>
<div class="rn" style="top:115px">2</div>
<div class="dots" style="top:137px"></div>
<div class="rn" style="top:145px">3</div>
<div class="dots" style="top:167px"></div>
<div class="rn" style="top:175px">4</div>
<div class="dots" style="top:197px"></div>
<div class="rn" style="top:205px">5</div>
<div class="dots" style="top:227px"></div>
<div class="rn" style="top:235px">6</div>
<div class="dots" style="top:257px"></div>
<div class="rn" style="top:265px">7</div>
<div class="dots" style="top:287px"></div>
<div class="rn" style="top:295px">8</div>
<div class="dots" style="top:317px"></div>
<div class="rn" style="top:325px">9</div>
<div class="dots" style="top:347px"></div>
<div class="rn" style="top:355px">10</div>
<div class="dots" style="top:377px"></div>
<div class="rn" style="top:385px">11</div>
<div class="dots" style="top:407px"></div>
<div class="rn" style="top:415px">12</div>
<div class="dots" style="top:437px"></div>
<div class="rn" style="top:445px">13</div>
<div class="dots" style="top:467px"></div>
<div class="rn" style="top:475px">14</div>
<div class="dots" style="top:497px"></div>
<div class="rn" style="top:505px">15</div>
<div class="dots" style="top:527px"></div>
<div class="rn" style="top:535px">16</div>
<div class="dots" style="top:557px"></div>
<div class="rn" style="top:565px">17</div>
<div class="dots" style="top:587px"></div>
<div class="rn" style="top:595px">18</div>
<div class="dots" style="top:617px"></div>
<div class="rn" style="top:625px">19</div>
<div class="dots" style="top:647px"></div>
<div class="rn" style="top:655px">20</div>
<div class="dots" style="top:677px"></div>
<div class="rn" style="top:685px">21</div>
<div class="dots" style="top:707px"></div>
<div class="rn" style="top:715px">22</div>
<div class="dots" style="top:737px"></div>
<div class="rn" style="top:745px">23</div>
<div class="dots" style="top:767px"></div>
<div class="rn" style="top:775px">24</div>
<div class="dots" style="top:797px"></div>
<div class="rn" style="top:805px">25</div>
<div class="dots" style="top:827px"></div>
<div class="rn" style="top:835px">26</div>
<div class="dots" style="top:857px"></div>
<div class="rn" style="top:865px">27</div>
<div class="dots" style="top:887px"></div>
<div class="rn" style="top:895px">28</div>
<div class="dots" style="top:917px"></div>
<div class="ct" style="left:930px;top:85px;letter-spacing:0.4px">Length</div>
<div class="ct" style="left:930px;top:115px">Thickness</div>
<div class="ct" style="right:153px;top:85px;letter-spacing:0.5px">40</div>
<div class="ct" style="right:153px;top:115px">6</div>
<!-- scrollbar -->
<svg class="abs" style="left:1248px;top:58px" width="24" height="846">
 <polyline points="5.5,9.5 9.5,5.5 13.5,9.5" fill="none" stroke="#7a7a7a" stroke-width="1.2"/>
 <rect x="3.5" y="20.5" width="12" height="830" fill="#b5b5b5" stroke="#8e8e8e" stroke-width="1"/>
 <rect x="3.5" y="14.5" width="12" height="17" rx="3" fill="#7a7a7a" stroke="#7a7a7a"/>
 <rect x="5" y="16" width="9" height="14" rx="2" fill="#e6e6e6"/>
</svg>
</body></html>
